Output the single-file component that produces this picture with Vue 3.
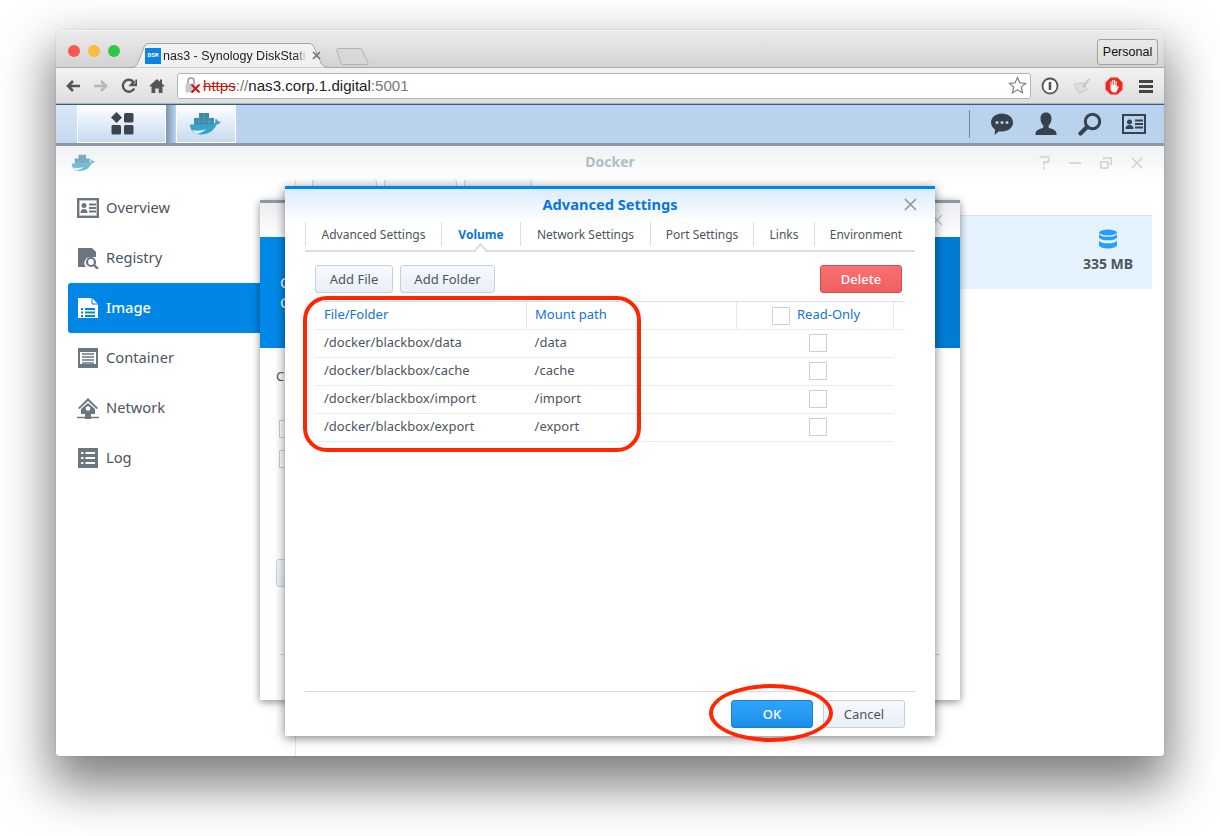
<template>
  <div class="stage">
    <svg class="defs" width="0" height="0">
      <symbol id="whale" viewBox="0 0 32 24">
        <path fill="#3d8ba8" d="M10 1h10v5H10zM5 6h20v7H5z" />
        <path stroke="#5fa6bf" stroke-width=".6" d="M15 1v5M10 6v7M15 6v7M20 6v7M5 9.500h20" />
        <path fill="#37a3cb" d="M1 12.500h22c2 0 3-1 3.300-3 .3-1.500.2-2.500.2-3 1.200.7 2 1.700 2.200 2.800.8-.2 1.800 0 3 .5-.8 1.800-2.300 2.700-4.200 2.900C25 18 20 22.500 12 22.500 5 22.500 1.300 19 1 12.500z" />
        <path fill="#e4eff3" d="M3 18c3 1 9 1 14-1-2.500 3-6.500 4.800-9.500 4.800-1.800-.6-3.400-2.100-4.500-3.800z" />
      </symbol>
    </svg>

    <div class="window">
      <div class="titlebar">
        <i class="light red"></i><i class="light amber"></i><i class="light green"></i>
        <div class="tab">
          <svg class="tab-shape" width="199" height="25" viewBox="0 0 199 25">
            <path d="M0 24.500C5 24.500 6 22 8 17L13 4C14 1.500 16 .5 19 .5H177C180 .5 182 1.500 183 4L190 20C192 23.500 194 24.500 199 24.500" fill="#f1f1f1" stroke="#a6a6a6" />
          </svg>
          <span class="favicon">DSM</span>
          <span class="tab-title">nas3 - Synology DiskStatio</span>
          <svg class="tab-close" width="9" height="9" viewBox="0 0 9 9"><path d="M1 1l7 7M8 1L1 8" stroke="#777" stroke-width="1.700" /></svg>
        </div>
        <svg class="newtab" width="33" height="17" viewBox="0 0 33 17">
          <path d="M.5 1.500C.5 1 1 .5 2 .5h22c1 0 1.500.5 2 1.500l6 13c.4 1-.5 1.500-1 1.500H7c-1 0-1.500-.5-2-1.500z" fill="#d8d8d8" stroke="#b3b3b3" />
        </svg>
        <button class="profile">Personal</button>
      </div>

      <div class="toolbar">
        <div class="nav-icons">
          <svg width="16" height="16" viewBox="0 0 16 16"><path d="M15 8H3M8 3L3 8l5 5" fill="none" stroke="#555" stroke-width="2.600" /></svg>
          <svg width="16" height="16" viewBox="0 0 16 16"><path d="M1 8h12M8 3l5 5-5 5" fill="none" stroke="#b7b7b7" stroke-width="2.600" /></svg>
          <svg width="16" height="16" viewBox="0 0 16 16"><path d="M13.200 10.500A6 6 0 1 1 12.600 4L10 7h5.500V1.500" fill="none" stroke="#555" stroke-width="2.400" /></svg>
          <svg width="16" height="16" viewBox="0 0 16 16"><path d="M8 1l3 2.700V1.500h2v4l2.500 2.300-1 1L13.500 8v7H9.700v-4.500H6.300V15H2.500V8L1.500 8.800l-1-1z" fill="#555" /></svg>
        </div>
        <div class="omnibox">
          <svg class="lock" width="17" height="17" viewBox="0 0 17 17">
            <path d="M4 7V4a3 3 0 0 1 6 0v3" fill="none" stroke="#999" stroke-width="1.500" />
            <rect x="1.500" y="6.500" width="10" height="9" rx="1" fill="#c9c9c9" />
            <path d="M7.500 7.500l8 8M15.500 7.500l-8 8" stroke="#d0121b" stroke-width="2" />
          </svg>
          <span class="url"><s class="scheme">https</s><span class="dim">://</span>nas3.corp.1.digital<span class="dim">:5001</span></span>
          <svg class="star" width="19" height="19" viewBox="0 0 19 19"><path d="M9.500 1.500l2.400 5.300 5.700.6-4.300 3.800 1.300 5.700-5.100-3-5.100 3 1.300-5.700L1.400 7.400l5.700-.6z" fill="#fff" stroke="#777" stroke-width="1.100" /></svg>
        </div>
        <div class="ext-icons">
          <svg width="18" height="18" viewBox="0 0 18 18"><circle cx="9" cy="9" r="7.500" fill="#fff" stroke="#555" stroke-width="1.800" /><path d="M7.700 5h2.600v8H7.700z" fill="#555" /></svg>
          <svg width="18" height="18" viewBox="0 0 18 18"><path d="M1 7l10-1 3 7-8 3z" fill="#dedede" stroke="#c9c9c9" /><path d="M9 9l7-8 1 1-6 9z" fill="#c4c4c4" /></svg>
          <svg width="18" height="18" viewBox="0 0 18 18"><path d="M5.500.5h7l5 5v7l-5 5h-7l-5-5v-7z" fill="#f0281e" /><path d="M5.500 8V4.500h1V8h.7V3h1.100v5h.6V3h1.100v5h.6V4h1.100v7l1.200-2 1 .5-2 4.500c-.5 1-1.200 1.500-2.300 1.500H8.500C6.800 15 5.500 13.500 5.500 12z" fill="#fff" /></svg>
          <svg width="18" height="18" viewBox="0 0 18 18"><path d="M2 3h14v3H2zM2 8h14v3H2zM2 13h14v3H2z" fill="#444" /></svg>
        </div>
      </div>

      <div class="taskbar">
        <div class="task-start"></div>
        <div class="task-btn menu-btn">
          <svg width="24" height="24" viewBox="0 0 24 24" fill="#3a4550">
            <path d="M6.500 0l5.500 5.500L6.500 11 1 5.500z" />
            <rect x="14" y="1" width="9.500" height="9.500" rx="1.500" />
            <rect x="1.500" y="13" width="9.500" height="9.500" rx="1.500" />
            <rect x="14" y="13" width="9.500" height="9.500" rx="1.500" />
          </svg>
        </div>
        <div class="task-gap"></div>
        <div class="task-btn docker-btn">
          <svg width="32" height="24"><use href="#whale" /></svg>
        </div>
        <div class="task-right">
          <div class="task-sep"></div>
          <svg width="24" height="24" viewBox="0 0 24 24" fill="#37424e">
            <path d="M12 1.500c6 0 11 3.800 11 9s-5 9-11 9c-1 0-2-.1-2.900-.3L4.500 23l.6-5.500C2.600 15.900 1 13.400 1 10.500c0-5.200 5-9 11-9z" />
            <circle cx="7" cy="10.500" r="1.500" fill="#b9d3ef" /><circle cx="12" cy="10.500" r="1.500" fill="#b9d3ef" /><circle cx="17" cy="10.500" r="1.500" fill="#b9d3ef" />
          </svg>
          <svg width="24" height="24" viewBox="0 0 24 24" fill="#37424e">
            <path d="M12 .5c3.500 0 5.500 2.500 5.500 6 0 3-1.200 5.600-2.800 7v2.200c2.800 1 7.300 2 7.800 5.300v2H1.500v-2c.5-3.300 5-4.300 7.800-5.300v-2.200C7.700 12.100 6.500 9.500 6.500 6.500c0-3.500 2-6 5.500-6z" />
          </svg>
          <svg width="24" height="24" viewBox="0 0 24 24" fill="none" stroke="#37424e">
            <circle cx="14.500" cy="9.500" r="7.200" stroke-width="3" />
            <path d="M9 15l-6.500 6.500" stroke-width="4.200" stroke-linecap="round" />
          </svg>
          <svg width="24" height="24" viewBox="0 0 24 24">
            <rect x="1" y="3" width="22" height="18" fill="none" stroke="#37424e" stroke-width="2" />
            <circle cx="7.500" cy="10" r="2.500" fill="#37424e" /><path d="M3.500 17c0-3 1.500-4 4-4s4 1 4 4z" fill="#37424e" />
            <path d="M13 8.500h8M13 12h8M13 15.500h8" stroke="#37424e" stroke-width="1.800" />
          </svg>
        </div>
      </div>

      <div class="app-header">
        <svg class="app-whale" width="24" height="18"><use href="#whale" /></svg>
        <span class="app-title">Docker</span>
        <div class="app-controls">
          <svg width="12" height="14" viewBox="0 0 12 14" fill="none" stroke="#cdd2d7" stroke-width="1.600"><path d="M1.500 1h9v5H6v3.500" /><path d="M6 11v2.500" /></svg>
          <svg width="12" height="12" viewBox="0 0 12 12"><path d="M0 6h12" stroke="#cdd2d7" stroke-width="1.600" /></svg>
          <svg width="12" height="12" viewBox="0 0 12 12" fill="none" stroke="#cdd2d7" stroke-width="1.500"><rect x=".8" y="5" width="7" height="6" /><path d="M3.500 2.500V1h8v6H9" /></svg>
          <svg width="12" height="12" viewBox="0 0 12 12"><path d="M1 1l10 10M11 1L1 11" stroke="#cdd2d7" stroke-width="1.600" /></svg>
        </div>
      </div>

      <div class="app-body">
        <aside class="sidebar">
          <div v-for="item in navItems" :key="item.label" class="nav-item" :class="{ active: item.label === 'Image' }">
            <svg class="nav-icon" width="22" height="22" viewBox="0 0 22 22" v-html="item.icon"></svg>
            <span class="nav-label">{{ item.label }}</span>
          </div>
        </aside>
        <main class="main">
          <div class="main-tools">
            <span class="ghost-btn w65"></span>
            <span class="ghost-btn w73"></span>
            <span class="ghost-btn w68"></span>
          </div>
          <div class="image-row">
            <div class="image-size">
              <svg width="18" height="20" viewBox="0 0 18 20" fill="#2a9dfb">
                <ellipse cx="9" cy="3.500" rx="9" ry="3" />
                <path d="M0 5c1 2 5 2.800 9 2.800S17 7 18 5v3.500c-1 2-5 2.800-9 2.800S1 10.500 0 8.500zM0 11.500c1 2 5 2.800 9 2.800s8-.8 9-2.800v5c-1 2-5 3-9 3s-8-1-9-3z" />
              </svg>
              <b>335 MB</b>
            </div>
          </div>
        </main>
      </div>

      <section class="wizard">
        <div class="wizard-head">
          <svg class="wizard-close" width="12" height="12" viewBox="0 0 12 12"><path d="M1 1l10 10M11 1L1 11" stroke="#c4c9ce" stroke-width="1.600" /></svg>
        </div>
        <div class="wizard-band">
          <span class="band-line">C</span>
          <span class="band-line">C</span>
        </div>
        <div class="wizard-body">
          <p class="wizard-text">C</p>
          <i class="box"></i>
          <i class="box second"></i>
          <span class="ghost-btn wizard-btn"></span>
        </div>
        <div class="wizard-foot"></div>
      </section>

      <section class="dialog">
        <header class="dialog-head">
          <h1>Advanced Settings</h1>
          <svg class="dialog-close" width="13" height="13" viewBox="0 0 13 13"><path d="M1 1l11 11M12 1L1 12" stroke="#8f979f" stroke-width="1.700" /></svg>
        </header>
        <nav class="tabs">
          <span v-for="t in tabs" :key="t" class="tab-item" :class="{ current: t === 'Volume' }">{{ t }}</span>
        </nav>
        <div class="actions">
          <button class="btn">Add File</button>
          <button class="btn">Add Folder</button>
          <button class="btn danger">Delete</button>
        </div>
        <div class="table">
          <div class="row head">
            <div class="cell path">File/Folder</div>
            <div class="cell mount">Mount path</div>
            <div class="cell ro"><i class="box"></i>Read-Only</div>
          </div>
          <div v-for="r in rows" :key="r" class="row">
            <div class="cell path">/docker/blackbox/{{ r }}</div>
            <div class="cell mount">/{{ r }}</div>
            <div class="cell check"><i class="box"></i></div>
          </div>
        </div>
        <footer class="dialog-foot">
          <button class="btn primary">OK</button>
          <button class="btn">Cancel</button>
        </footer>
      </section>

      <div class="mark mark-table"></div>
      <div class="mark mark-ok"></div>
    </div>
  </div>
</template>

<script setup>
const tabs = ['Advanced Settings', 'Volume', 'Network Settings', 'Port Settings', 'Links', 'Environment']
const rows = ['data', 'cache', 'import', 'export']

const navItems = [
  {
    label: 'Overview',
    icon: '<rect x="1.200" y="2.200" width="19.600" height="17.600" fill="none" stroke="currentColor" stroke-width="2.400"/><circle cx="7" cy="8.500" r="2.500" fill="currentColor"/><path d="M3.500 16c0-3 1.500-4 3.500-4s3.500 1 3.500 4z" fill="currentColor"/><path d="M12 7.500h7M12 11h7M12 14.500h7" stroke="currentColor" stroke-width="1.800"/>'
  },
  {
    label: 'Registry',
    icon: '<path d="M1 1h14l4 4v5h-5a6 6 0 0 0-5 10H1z" fill="currentColor"/><circle cx="14" cy="15" r="4" fill="none" stroke="currentColor" stroke-width="2.200"/><path d="M17 18l4 4" stroke="currentColor" stroke-width="2.400"/>'
  },
  {
    label: 'Image',
    icon: '<path d="M1 1h14l6 6v14H1z" fill="#fff"/><path d="M15 1v6h6" fill="none" stroke="#0086e5" stroke-width="1"/><path d="M4 11h2v2H4zM4 14.500h2v2H4zM4 18h2v2H4zM8 11h10v2H8zM8 14.500h10v2H8zM8 18h10v2H8z" fill="#0086e5"/>'
  },
  {
    label: 'Container',
    icon: '<path d="M1 1h20v2H1zM1 19h20v2H1z" fill="currentColor"/><rect x="2" y="4" width="18" height="14" fill="none" stroke="currentColor" stroke-width="2"/><path d="M5 7h12M5 10h12M5 13h12M5 16h12" stroke="currentColor" stroke-width="1.500"/>'
  },
  {
    label: 'Network',
    icon: '<path d="M11 1L1 11l1.500 1L11 4l8.500 8 1.500-1z" fill="currentColor"/><path d="M4 12l7-6 7 6v5H4z" fill="currentColor"/><circle cx="11" cy="11.500" r="2.300" fill="#fff"/><path d="M0 20.500h22" stroke="currentColor" stroke-width="1.500"/><rect x="8" y="17" width="6" height="5" fill="currentColor"/>'
  },
  {
    label: 'Log',
    icon: '<rect x="1" y="1" width="20" height="20" fill="currentColor"/><path d="M4 5h2.500v2H4zM4 10h2.500v2H4zM4 15h2.500v2H4zM8.500 5H18v2H8.500zM8.500 10H18v2H8.500zM8.500 15H18v2H8.500z" fill="#fff"/>'
  }
]
</script>

<style>
html,
body {
  margin: 0;
  background: #fff;
}
</style>

<style scoped>
.stage {
  width: 1220px;
  height: 836px;
  overflow: hidden;
  padding: 30px 56px 0;
  box-sizing: border-box;
  font-family: "Noto Sans", "Open Sans", sans-serif;
}

.defs {
  position: absolute;
}

.window {
  position: relative;
  width: 1108px;
  height: 726px;
  display: flex;
  flex-direction: column;
  background: #fff;
  border-radius: 5px 5px 3px 3px;
  box-shadow: 0 24px 50px 6px rgba(0, 0, 0, 0.5), 0 0 1px rgba(0, 0, 0, 0.4);
}

.titlebar {
  height: 38px;
  box-sizing: border-box;
  display: flex;
  align-items: flex-end;
  padding-left: 12px;
  background: linear-gradient(#ececec, #d2d2d2);
  border-top: 1px solid #f4f4f4;
  border-bottom: 1px solid #a9a9a9;
  border-radius: 5px 5px 0 0;
}

.light {
  width: 12px;
  height: 12px;
  border-radius: 50%;
  margin: 0 8px 10px 0;
  align-self: flex-end;
}

.red { background: #fc5753; }
.amber { background: #fdbc40; }
.green { background: #33c748; }

.tab {
  position: relative;
  width: 199px;
  height: 25px;
  margin: 0 0 -1px 3px;
  display: flex;
  align-items: center;
  font: 12.500px "Liberation Sans", sans-serif;
  color: #222;
}

.tab-shape {
  position: absolute;
  left: 0;
  top: 0;
}

.favicon {
  position: relative;
  width: 16px;
  height: 16px;
  margin-left: 14px;
  background: #0a84e8;
  color: #fff;
  font: bold 6px/16px "Liberation Mono", monospace;
  text-align: center;
}

.tab-title {
  position: relative;
  width: 144px;
  margin-left: 2px;
  white-space: nowrap;
  -webkit-mask-image: linear-gradient(to right, #000 92%, transparent);
  mask-image: linear-gradient(to right, #000 92%, transparent);
}

.tab-close {
  position: relative;
  margin-left: 5px;
}

.newtab {
  margin: 0 0 2px 6px;
}

.profile {
  width: 61px;
  height: 26px;
  margin: 0 6px 2px auto;
  padding: 0;
  background: linear-gradient(#e9e9e9, #dedede);
  border: 1px solid #a2a2a2;
  border-radius: 3px;
  font: 12.500px "Liberation Sans", sans-serif;
  color: #111;
}

.toolbar {
  height: 36px;
  box-sizing: border-box;
  display: flex;
  align-items: center;
  background: linear-gradient(#f2f2f2, #dedede);
  border-bottom: 1px solid #b1b1b1;
}

.nav-icons {
  width: 121px;
  padding-left: 9px;
  box-sizing: border-box;
  display: flex;
  gap: 12px;
}

.omnibox {
  width: 854px;
  height: 26px;
  box-sizing: border-box;
  display: flex;
  align-items: center;
  padding: 0 3px 0 6px;
  background: #fff;
  border: 1px solid #b4b4b4;
  border-radius: 3px;
}

.url {
  margin-left: 2px;
  font: 15.100px "Liberation Sans", sans-serif;
  color: #222;
}

.scheme {
  color: #c0190f;
}

.dim {
  color: #777;
}

.star {
  margin-left: auto;
}

.ext-icons {
  display: flex;
  gap: 14px;
  margin-left: 10px;
}

.taskbar {
  height: 42px;
  box-sizing: border-box;
  display: flex;
  background: #b9d3ef;
  border-top: 1px solid #2f5f96;
  border-bottom: 3px solid #8b98a6;
}

.task-start {
  width: 21px;
  background: linear-gradient(#dbe8f7, #c3d8f0);
  border-right: 1px solid #fff;
}

.task-btn {
  display: flex;
  align-items: center;
  justify-content: center;
  box-sizing: border-box;
  background: linear-gradient(#ffffff, #c5daf1);
  border: solid #fff;
  border-width: 0 1px 1px 0;
}

.menu-btn {
  width: 88px;
}

.task-gap {
  width: 10px;
  background: linear-gradient(to right, #7d93ad, #b9d3ef);
}

.docker-btn {
  width: 60px;
  border-left-width: 1px;
}

.docker-btn svg {
  margin-right: 2px;
}

.task-right {
  margin-left: auto;
  display: flex;
  align-items: center;
  gap: 20px;
  padding-right: 18px;
}

.task-sep {
  width: 1px;
  height: 28px;
  background: #6e88a6;
}

.app-header {
  height: 34px;
  flex: none;
  display: flex;
  align-items: center;
  position: relative;
  padding-left: 15px;
  background: linear-gradient(#eff1f4, #fff);
}

.app-whale {
  opacity: 0.7;
}

.app-title {
  position: absolute;
  left: 0;
  right: 0;
  top: 6px;
  text-align: center;
  font-size: 14px;
  font-weight: 700;
  color: #b6bcc3;
}

.app-controls {
  margin-left: auto;
  display: flex;
  align-items: center;
  gap: 19px;
  padding-right: 21px;
}

.app-body {
  flex: 1;
  display: flex;
  min-height: 0;
}

.sidebar {
  width: 240px;
  box-sizing: border-box;
  padding: 3px 0 0 12px;
  border-right: 1px solid #e3e6e9;
}

.nav-item {
  height: 50px;
  display: flex;
  align-items: center;
  gap: 7px;
  padding-left: 9px;
  font-size: 14.700px;
  color: #4b5560;
  border-radius: 3px 0 0 3px;
}

.nav-label {
  margin-bottom: 2px;
}

.nav-icon {
  color: #6b7680;
}

.nav-item.active {
  background: #0086e5;
  color: #fff;
  font-weight: 500;
}

.main {
  flex: 1;
  padding-right: 12px;
}

.main-tools {
  display: flex;
  gap: 7px;
  padding-left: 16px;
  margin-top: -1px;
}

.ghost-btn {
  height: 28px;
  box-sizing: border-box;
  background: linear-gradient(#f7fafd, #e9eff6);
  border: 1px solid #c7d2de;
  border-radius: 3px;
}

.w65 { width: 65px; }
.w73 { width: 73px; }
.w68 { width: 68px; }

.image-row {
  height: 74px;
  margin-top: 8px;
  box-sizing: border-box;
  display: flex;
  justify-content: flex-end;
  background: #e5f3fe;
  border-top: 1px solid #d3e3f1;
  border-bottom: 1px solid #edf2f6;
}

.image-size {
  width: 88px;
  padding: 13px 0 0;
  display: flex;
  flex-direction: column;
  align-items: center;
  gap: 5px;
}

.image-size b {
  font-size: 14px;
  color: #4c5661;
}

.wizard {
  position: absolute;
  left: 204px;
  top: 170px;
  width: 700px;
  height: 500px;
  display: flex;
  flex-direction: column;
  background: #fff;
  border-top: 3px solid #8b98a6;
  box-sizing: border-box;
  box-shadow: 0 2px 8px rgba(0, 0, 0, 0.45);
}

.wizard-head {
  height: 34px;
  flex: none;
  display: flex;
  justify-content: flex-end;
  align-items: center;
  padding-right: 17px;
  background: linear-gradient(#eaedf1, #fff);
}

.wizard-band {
  height: 111px;
  flex: none;
  display: flex;
  flex-direction: column;
  padding: 35px 0 0 20px;
  box-sizing: border-box;
  background: linear-gradient(150deg, #0088e8 72%, #007dd3 72%);
  color: #fff;
  font-size: 15px;
  line-height: 20px;
}

.wizard-body {
  flex: 1;
  position: relative;
}

.wizard-text {
  margin: 19px 0 0 16px;
  font-size: 13px;
  color: #4b5560;
}

.wizard .box {
  position: absolute;
  left: 19px;
  top: 72px;
}

.wizard .box.second {
  top: 102px;
}

.wizard-btn {
  position: absolute;
  left: 16px;
  top: 211px;
  width: 60px;
}

.wizard-foot {
  height: 45px;
  margin: 0 20px;
  border-top: 1px solid #d5d9dd;
}

.dialog {
  position: absolute;
  left: 229px;
  top: 156px;
  width: 650px;
  height: 550px;
  box-sizing: border-box;
  display: flex;
  flex-direction: column;
  background: #fff;
  border-top: 3px solid #0086e5;
  box-shadow: 0 2px 10px rgba(0, 0, 0, 0.5);
  font-size: 13px;
  color: #4b5560;
}

.dialog-head {
  position: relative;
  height: 33px;
  flex: none;
  display: flex;
  align-items: center;
  justify-content: center;
  background: linear-gradient(#daecfb, #fff);
}

.dialog-head h1 {
  margin: 0 0 4px;
  font-size: 14.600px;
  font-weight: 700;
  color: #0a76dc;
}

.dialog-close {
  position: absolute;
  right: 18px;
  top: 9px;
}

.tabs {
  height: 30px;
  flex: none;
  margin: 0 20px;
  display: grid;
  grid-template-columns: 136px 79px 130px 103px 61px 1fr;
  box-sizing: border-box;
  border-bottom: 2px solid #dadde0;
  position: relative;
  padding-bottom: 4px;
  font-size: 12px;
}

.tab-item {
  display: flex;
  align-items: center;
  justify-content: center;
  border-left: 1px solid #d6e0ea;
}

.tab-item:last-child {
  padding-left: 2px;
}

.tab-item.current {
  position: relative;
  font-weight: 700;
  color: #0a76dc;
}

.tab-item.current::after {
  content: "";
  position: absolute;
  left: 34px;
  bottom: -8px;
  width: 7px;
  height: 7px;
  background: #fff;
  border: solid #dadde0;
  border-width: 2px 0 0 2px;
  transform: rotate(45deg);
}

.actions {
  display: flex;
  gap: 7px;
  margin: 13px 33px 8px 30px;
}

.btn {
  height: 28px;
  padding: 0;
  box-sizing: border-box;
  background: linear-gradient(#f7fafd, #e8eff6);
  border: 1px solid #c3d0dd;
  border-radius: 3px;
  font: inherit;
  color: #4b5560;
}

.actions .btn:nth-child(1) { width: 78px; }
.actions .btn:nth-child(2) { width: 95px; }

.btn.danger {
  width: 82px;
  margin-left: auto;
  background: linear-gradient(#fa7070, #ee5f60);
  border-color: #d54a4d;
  color: #fff;
  font-weight: 500;
}

.table {
  margin: 0 30px;
  border-top: 1px solid #d5e0ea;
}

.row {
  height: 28px;
  box-sizing: border-box;
  width: 578px;
  display: flex;
  border-bottom: 1px solid #e8ecef;
}

.row.head {
  width: 590px;
}

.cell {
  box-sizing: border-box;
  display: flex;
  align-items: center;
  padding-bottom: 3px;
  white-space: nowrap;
}

.path {
  width: 212px;
  padding-left: 9px;
}

.mount {
  width: 210px;
  padding-left: 8px;
}

.ro {
  width: 157px;
  padding: 0 0 3px 35px;
  gap: 7px;
}

.check {
  width: 157px;
  padding: 0 0 2px 73px;
}

.head .cell {
  color: #1372dc;
  border-right: 1px solid #dfe8f0;
}

.head .ro .box {
  margin-top: 3px;
}

.box {
  display: block;
  flex: none;
  width: 18px;
  height: 18px;
  box-sizing: border-box;
  background: #fff;
  border: 1px solid #c5d1dd;
}

.dialog-foot {
  margin: auto 20px 0;
  height: 45px;
  box-sizing: border-box;
  display: flex;
  justify-content: flex-end;
  gap: 10px;
  padding: 8px 10px 8px 0;
  border-top: 1px solid #d9dcdf;
}

.dialog-foot .btn {
  width: 82px;
}

.btn.primary {
  background: linear-gradient(#30a4fb, #1c8ee8);
  border-color: #1a80d0;
  color: #fff;
  font-weight: 500;
}

.mark {
  position: absolute;
  box-sizing: border-box;
  border: 4.500px solid #ff2600;
}

.mark-table {
  left: 247px;
  top: 266px;
  width: 338px;
  height: 156px;
  border-radius: 24px;
}

.mark-ok {
  left: 653px;
  top: 654px;
  width: 124px;
  height: 58px;
  border-radius: 50%;
}
</style>
